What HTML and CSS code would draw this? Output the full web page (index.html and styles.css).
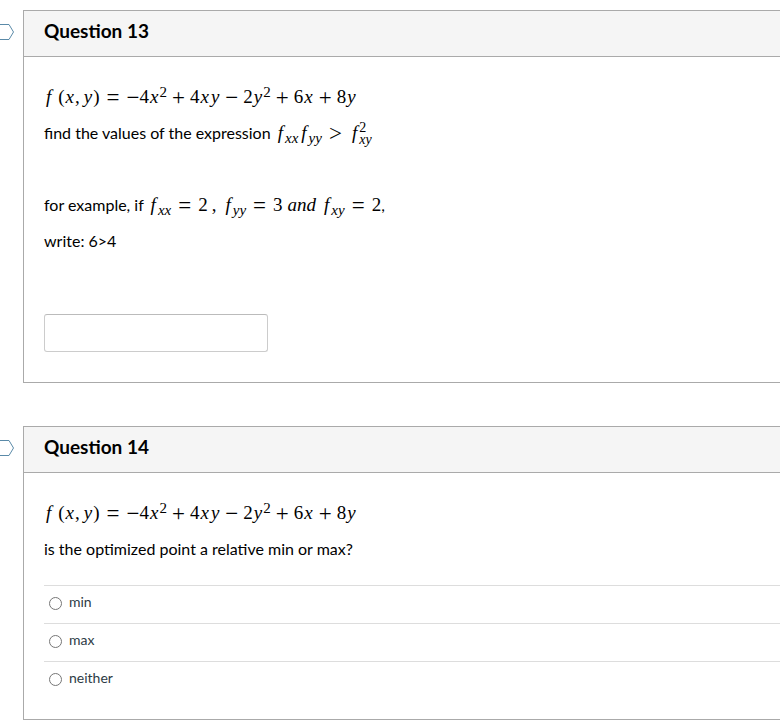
FILE: index.html
```html
<!DOCTYPE html>
<html lang="en">
<head>
<meta charset="utf-8">
<title>Quiz</title>
<link rel="stylesheet" href="styles.css">
</head>
<body>
<main class="quiz">
  <section class="row">
    <svg class="flag" viewBox="0 0 14 18" aria-hidden="true"><path d="M-4 1.5H9L13.5 9L9 16.5H-4"/></svg>
    <article class="question">
      <h2 class="title">Question 13</h2>
      <div class="content">
        <p><span class="math"><i class="fn">f</i><span>(</span><i class="v">x</i><span class="comma">,</span><i class="v">y</i><span>)</span><span class="rel">=</span><span class="sign">−</span><span>4</span><i class="v">x</i><sup>2</sup><span class="op">+</span><span>4</span><i class="v">x</i><i class="v">y</i><span class="op">−</span><span>2</span><i class="v">y</i><sup>2</sup><span class="op">+</span><span>6</span><i class="v">x</i><span class="op">+</span><span>8</span><i class="v">y</i></span></p>
        <p><label for="answer">find the values of the expression</label> <span class="math"><i class="f">f</i><sub>xx</sub><i class="f">f</i><sub>yy</sub><span class="rel">&gt;</span><i class="f">f</i><span class="scripts"><span>2</span><i>xy</i></span></span></p>
        <p>&nbsp;</p>
        <p>for example, if <span class="math"><i class="f">f</i><sub>xx</sub><span class="rel">=</span><span>2</span><span class="sep">,</span><i class="f">f</i><sub>yy</sub><span class="rel">=</span><span>3</span><i class="word">and</i><i class="f">f</i><sub>xy</sub><span class="rel">=</span><span>2</span></span>,</p>
        <p>write: 6&gt;4</p>
        <input class="answer" id="answer" type="text">
      </div>
    </article>
  </section>
  <section class="row">
    <svg class="flag" viewBox="0 0 14 18" aria-hidden="true"><path d="M-4 1.5H9L13.5 9L9 16.5H-4"/></svg>
    <article class="question">
      <h2 class="title">Question 14</h2>
      <div class="content">
        <p><span class="math"><i class="fn">f</i><span>(</span><i class="v">x</i><span class="comma">,</span><i class="v">y</i><span>)</span><span class="rel">=</span><span class="sign">−</span><span>4</span><i class="v">x</i><sup>2</sup><span class="op">+</span><span>4</span><i class="v">x</i><i class="v">y</i><span class="op">−</span><span>2</span><i class="v">y</i><sup>2</sup><span class="op">+</span><span>6</span><i class="v">x</i><span class="op">+</span><span>8</span><i class="v">y</i></span></p>
        <p>is the optimized point a relative min or max?</p>
        <div class="choices">
          <label class="choice"><input type="radio" name="optimum"><span>min</span></label>
          <label class="choice"><input type="radio" name="optimum"><span>max</span></label>
          <label class="choice"><input type="radio" name="optimum"><span>neither</span></label>
        </div>
      </div>
    </article>
  </section>
</main>
</body>
</html>
```
FILE: styles.css
```css
* { box-sizing: border-box; }
body {
  margin: 0;
  background: #fff;
  color: #000;
  font: 16px/24px Lato, sans-serif;
}
.quiz {
  display: flex;
  flex-direction: column;
  gap: 43px;
  padding: 10px 0 3px;
  overflow: hidden;
}
.row {
  display: flex;
  align-items: flex-start;
  gap: 9px;
}
.flag {
  flex: none;
  width: 14px;
  height: 18px;
  margin-top: 13px;
  fill: none;
  stroke: #5a8aa8;
}
.question {
  flex: 1;
  border: 1px solid #aaa;
  border-right: 0;
}
.title {
  margin: 0;
  padding: 7px 20px 13px;
  border-bottom: 1px solid #aaa;
  background: #f5f5f5;
  font-size: 19px;
  line-height: 25px;
  font-weight: 700;
}
.content { padding: 28px 0 20px 20px; }
p { margin: 0 0 12px; height: 24px; white-space: nowrap; }
.math {
  font-family: "Liberation Serif", serif;
  font-size: 19px;
  line-height: 24px;
}
.math sup, .math sub {
  font-size: 15px;
  line-height: 0;
}
.math sup { vertical-align: 6px; }
.math sub { font-style: italic; vertical-align: -4px; }
.v { margin: 0 1px; }
.fn { margin: 0 7px 0 2px; }
.f { margin: 0 2px 0 3px; }
.comma { margin-right: 3px; }
.rel, .op, .sign {
  font-size: 23px;
  line-height: 0;
  vertical-align: -2px;
}
.rel { margin: 0 7px; }
.op { margin: 0 5px; }
.sep { margin: 0 6px 0 4px; }
.word { margin: 0 5px; }
.scripts {
  display: inline-flex;
  flex-direction: column;
  height: 24px;
  font-size: 14px;
  line-height: 12px;
  vertical-align: 7px;
}
.answer {
  display: block;
  width: 224px;
  height: 38px;
  margin: 61px 0 10px;
  padding: 8px;
  border: 1px solid #ccc;
  border-top-color: #bbb;
  border-radius: 3px;
  background: #fff;
  font: inherit;
}
.choices { margin-top: 24px; }
.choice {
  display: flex;
  align-items: flex-start;
  height: 38px;
  padding: 6px 0 0 5px;
  border-top: 1px solid #ddd;
  font-size: 14px;
  line-height: 20px;
  color: #2d3b45;
}
.choice input {
  width: 13px;
  height: 13px;
  margin: 5px 7px 0 0;
}
```
